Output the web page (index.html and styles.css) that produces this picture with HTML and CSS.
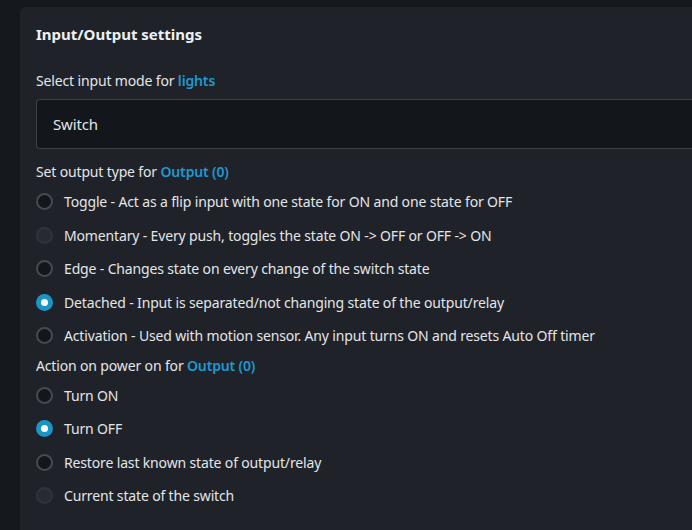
FILE: index.html
```html
<!DOCTYPE html>
<html>
<head>
<meta charset="utf-8">
<link rel="stylesheet" href="styles.css">
</head>
<body>
<div class="card">
  <h2 class="title">Input/Output settings</h2>
  <div class="field-label">Select input mode for <span class="hl">lights</span></div>
  <div class="select">Switch</div>
  <div class="field-label group">Set output type for <span class="hl">Output (0)</span></div>
  <div class="radios">
    <label class="radio"><span class="dot"></span>Toggle - Act as a flip input with one state for ON and one state for OFF</label>
    <label class="radio"><span class="dot disabled"></span>Momentary - Every push, toggles the state ON -&gt; OFF or OFF -&gt; ON</label>
    <label class="radio"><span class="dot"></span>Edge - Changes state on every change of the switch state</label>
    <label class="radio"><span class="dot checked"></span>Detached - Input is separated/not changing state of the output/relay</label>
    <label class="radio"><span class="dot"></span>Activation - Used with motion sensor. Any input turns ON and resets Auto Off timer</label>
  </div>
  <div class="field-label group next">Action on power on for <span class="hl">Output (0)</span></div>
  <div class="radios">
    <label class="radio"><span class="dot"></span>Turn ON</label>
    <label class="radio"><span class="dot checked"></span>Turn OFF</label>
    <label class="radio"><span class="dot"></span>Restore last known state of output/relay</label>
    <label class="radio"><span class="dot disabled"></span>Current state of the switch</label>
  </div>
</div>
</body>
</html>
```
FILE: styles.css
```css
html, body {
  margin: 0;
  padding: 0;
  background: #15191e;
  height: 100%;
  overflow: hidden;
}
body {
  font-family: "Noto Sans", "Open Sans", sans-serif;
  font-size: 14px;
  letter-spacing: -0.15px;
  color: #e3e5e8;
  padding: 7px 0 0 20px;
  box-sizing: border-box;
}
.card {
  background: #1f2329;
  border-radius: 6px 0 0 0;
  padding: 17px 0 20px 16px;
  height: 100%;
  box-sizing: border-box;
}
.title {
  margin: 0 0 27px;
  font-size: 15px;
  font-weight: 700;
  line-height: 20px;
  letter-spacing: 0;
  color: #eef0f2;
}
.field-label {
  line-height: 20px;
  margin-bottom: 8px;
}
.field-label.group {
  margin-top: 13px;
  margin-bottom: 3px;
}
.field-label.group.next {
  margin-top: 3px;
}
.hl {
  color: #1f97d0;
  font-weight: 600;
}
.select {
  height: 50px;
  box-sizing: border-box;
  border: 1px solid #3c4248;
  border-right: none;
  border-radius: 4px 0 0 4px;
  background: #13171c;
  padding: 0 16px;
  display: flex;
  align-items: center;
  font-size: 15px;
}
.radios {
  display: flex;
  flex-direction: column;
}
.radio {
  display: flex;
  align-items: center;
  height: 33.5px;
  gap: 11px;
}
.dot {
  width: 17px;
  height: 17px;
  border-radius: 50%;
  box-sizing: border-box;
  border: 2px solid #464b52;
  background: #13171c;
  flex: none;
  position: relative;
}
.dot.disabled {
  border-color: #2f343a;
  background: #272b31;
}
.dot.checked {
  border: none;
  background: #1b95c6;
}
.dot.checked::after {
  content: "";
  position: absolute;
  left: 5px;
  top: 5px;
  width: 7px;
  height: 7px;
  border-radius: 50%;
  background: #ffffff;
}
```
